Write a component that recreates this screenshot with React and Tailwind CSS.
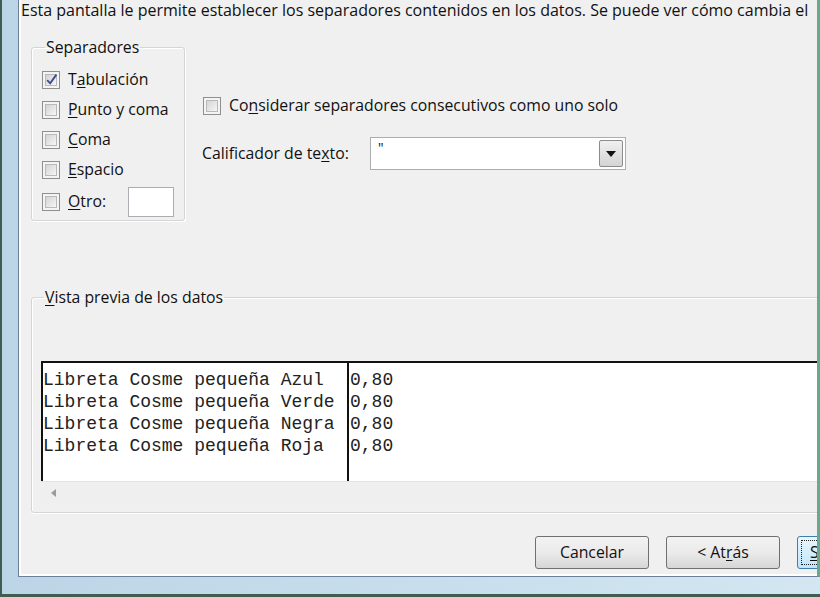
import React from "react";

const ui = { fontFamily: '"Open Sans", "Noto Sans", sans-serif' };

const CheckBox = ({ checked }) => (
  <div className="w-[18px] h-[18px] shrink-0 border border-[#8e8f8f] bg-[#f4f4f4] p-[2px]">
    <div className="w-full h-full border border-[#b9b9b9] bg-gradient-to-br from-[#d4d4d4] to-[#f6f6f6] relative">
      {checked && (
        <svg viewBox="0 0 12 12" className="absolute -left-[1px] -top-[2px] w-[13px] h-[13px]">
          <path d="M2 6.5 L4.8 9.5 L10.5 1.5" fill="none" stroke="#3d4f8f" strokeWidth="1.8" />
        </svg>
      )}
    </div>
  </div>
);

const Option = ({ pre, u, post, checked }) => (
  <div className="h-[30px] flex items-center gap-[8px]">
    <CheckBox checked={checked} />
    <span>
      {pre}
      <u className="underline-offset-2">{u}</u>
      {post}
    </span>
  </div>
);

const Button = ({ children, primary }) => (
  <div
    className={
      "w-[114px] h-[33px] shrink-0 rounded-[3px] border flex items-center justify-center " +
      (primary
        ? "border-[#3c7fb1] bg-gradient-to-b from-[#eaf6fd] to-[#bee6fd] p-[3px]"
        : "border-[#707070] bg-gradient-to-b from-[#f2f2f2] via-[#ebebeb] to-[#d6d6d6]")
    }
  >
    {children}
  </div>
);

export default function App() {
  const rows = [
    ["Azul ", "0,80"],
    ["Verde", "0,80"],
    ["Negra", "0,80"],
    ["Roja ", "0,80"],
  ];

  return (
    <div
      className="w-[820px] h-[597px] overflow-hidden bg-gradient-to-r from-[#bcd5e6] to-[#d3e6f2] border-l-2 border-b-[3px] border-[#3f5d50] pl-[16px] pb-[17px] flex text-[15.8px] text-[#111]"
      style={ui}
    >
      <div className="flex-1 min-w-0 bg-[#f0f0f0] border-l border-b border-[#6c7f98] shadow-[inset_2px_-2px_0_#ffffff] border-r-[3px] border-r-[#6aa88a] flex flex-col overflow-hidden">
        {/* cabecera */}
        <div className="h-[21px] leading-[21px] pl-[2px] whitespace-nowrap text-[16px]">
          Esta pantalla le permite establecer los separadores contenidos en los datos. Se puede ver cómo cambia el
        </div>

        <div className="flex items-start mt-[15px]">
          {/* Separadores */}
          <fieldset className="ml-[12px] w-[154px] h-[185px] border border-[#d5d5d5] rounded-[3px] shadow-[inset_1px_1px_0_#fff,1px_1px_0_#fff] pl-[10px] pt-[7px]">
            <legend className="ml-[3px] px-[1px] leading-[22px]">Separadores</legend>
            <Option checked u="a" pre="T" post="bulación" />
            <Option u="P" post="unto y coma" />
            <Option u="C" post="oma" />
            <Option u="E" post="spacio" />
            <div className="h-[33px] flex items-center gap-[8px]">
              <CheckBox />
              <span>
                <u className="underline-offset-2">O</u>tro:
              </span>
              <div className="ml-[14px] w-[46px] h-[30px] bg-white border border-[#abadb3]" />
            </div>
          </fieldset>

          {/* opciones derecha */}
          <div className="ml-[18px] flex flex-col">
            <div className="mt-[59px] h-[22px] flex items-center gap-[8px]">
              <CheckBox />
              <span>
                Co<u className="underline-offset-2">n</u>siderar separadores consecutivos como uno solo
              </span>
            </div>
            <div className="mt-[20px] flex items-center">
              <span className="w-[168px] -ml-[1px]">
                Calificador de te<u className="underline-offset-2">x</u>to:
              </span>
              <div className="w-[256px] h-[33px] bg-white border border-[#abadb3] flex items-stretch p-[2px]">
                <div className="flex-1 pl-[5px] leading-[16px] text-[14px]">"</div>
                <div className="w-[24px] border border-[#8c8c8c] rounded-[2px] bg-gradient-to-b from-[#f0f0f0] to-[#d4d4d4] flex items-center justify-center">
                  <svg viewBox="0 0 10 6" className="w-[10px] h-[6px]">
                    <polygon points="0,0 10,0 5,6" fill="#111" />
                  </svg>
                </div>
              </div>
            </div>
          </div>
        </div>

        {/* Vista previa */}
        <fieldset className="mt-[65px] ml-[12px] -mr-[20px] h-[227px] border border-[#d5d5d5] rounded-[3px] shadow-[inset_1px_1px_0_#fff,0_1px_0_#fff] pl-[9px]">
          <legend className="ml-[3px] px-[1px] leading-[22px]">
            <u className="underline-offset-2">V</u>ista previa de los datos
          </legend>
          <div className="mt-[53px] h-[120px] bg-white border-t-2 border-l-2 border-[#111] flex text-[18px] leading-[22px] text-[#222]" style={{ fontFamily: '"Liberation Mono", monospace' }}>
            <div className="w-[306px] pt-[6px] border-r-2 border-[#111] whitespace-pre">
              {rows.map(([c], i) => (
                <div key={i}>Libreta Cosme pequeña {c}</div>
              ))}
            </div>
            <div className="pl-[1px] pt-[6px] whitespace-pre">
              {rows.map(([, v], i) => (
                <div key={i}>{v}</div>
              ))}
            </div>
          </div>
          <div className="h-[22px] border-t border-[#e2e2e2] bg-[#efefef] flex items-center pl-[10px]">
            <svg viewBox="0 0 5 8" className="w-[5px] h-[8px]">
              <polygon points="5,0 5,8 0,4" fill="#9a9a9a" />
            </svg>
          </div>
        </fieldset>

        {/* botones */}
        <div className="mt-[23px] flex gap-[17px] pl-[516px]">
          <Button>Cancelar</Button>
          <Button>
            &lt; At<u className="underline-offset-2">r</u>ás
          </Button>
          <Button primary>
            <div className="w-full h-full border border-dotted border-[#222] flex items-center justify-start pl-[8px]">
              <u className="underline-offset-2">S</u>
            </div>
          </Button>
        </div>
      </div>
    </div>
  );
}
